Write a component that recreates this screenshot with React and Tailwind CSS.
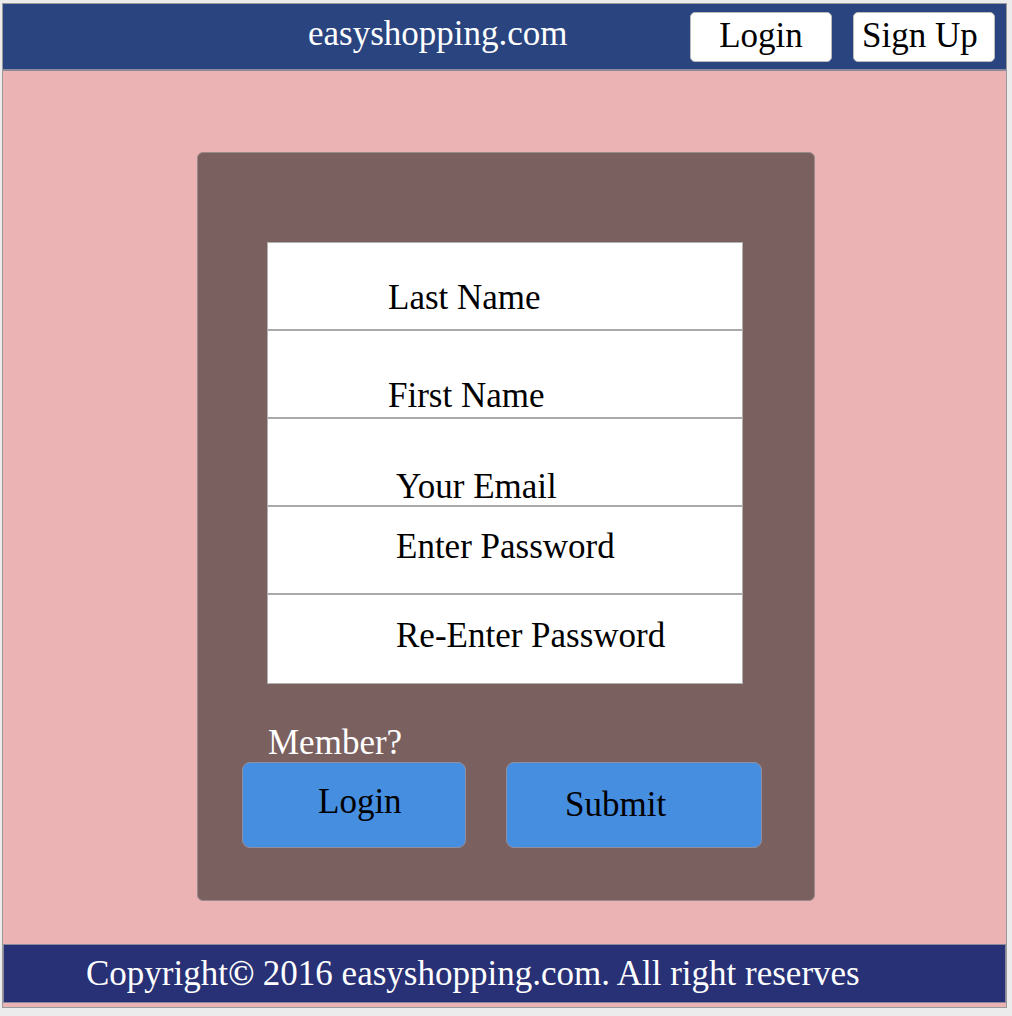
import React from "react";

const serif = { fontFamily: '"Liberation Serif", "Times New Roman", serif' };

function Field({ label, pad, last }) {
  return (
    <div className={`flex h-[88px] ${last ? "" : "border-b-2 border-[#a9a9a9]"}`}>
      <div className={`w-full ${pad}`}>{label}</div>
    </div>
  );
}

export default function App() {
  return (
    <div className="h-[1016px] w-[1012px] bg-[#ececec] pl-[2px] pt-[3px] text-[35px] leading-none" style={serif}>
      <div className="flex h-[1005px] w-[1005px] flex-col border border-[#9a9a9a] bg-[#ebb3b3]">
        <header className="flex h-[67px] shrink-0 items-center border-b-2 border-[#8a8a9a] bg-[#29447f]">
          <div className="ml-[305px] w-[382px] pb-[6px] text-white">easyshopping.com</div>
          <button className="flex h-[50px] w-[142px] items-center justify-center rounded-[5px] border border-[#bbb] bg-white pb-[2px] text-black">
            Login
          </button>
          <button className="ml-[21px] flex h-[50px] w-[142px] items-center justify-start rounded-[5px] border border-[#bbb] bg-white pb-[2px] pl-[8px] text-black">
            Sign Up
          </button>
        </header>

        <main className="flex-1">
          <div className="ml-[194px] mt-[81px] flex h-[749px] w-[618px] flex-col rounded-[6px] border border-[#9a8a8a] bg-[#7b6060]">
            <div className="ml-[69px] mt-[89px] flex w-[476px] flex-col border border-[#b0b0b0] bg-white text-black">
              <Field label="Last Name" pad="pl-[120px] pt-[37px]" />
              <Field label="First Name" pad="pl-[120px] pt-[47px]" />
              <Field label="Your Email" pad="pl-[128px] pt-[50px]" />
              <Field label="Enter Password" pad="pl-[128px] pt-[22px]" />
              <Field label="Re-Enter Password" pad="pl-[128px] pt-[23px]" last />
            </div>
            <div className="ml-[70px] mt-[41px] text-white">Member?</div>
            <div className="ml-[44px] mt-[2px] flex gap-[40px]">
              <button className="flex h-[86px] w-[224px] justify-start rounded-[8px] border border-[#8f8f9f] bg-[#468ee0] pl-[75px] pt-[21px] text-black">
                Login
              </button>
              <button className="flex h-[86px] w-[256px] justify-start rounded-[8px] border border-[#8f8f9f] bg-[#468ee0] pl-[58px] pt-[24px] text-black">
                Submit
              </button>
            </div>
          </div>
        </main>

        <footer className="mb-[4px] flex h-[59px] shrink-0 items-center border border-[#8a8a9a] bg-[#283176] pl-[82px] text-white">
          <span>
            Copyright<span className="font-bold">©</span> 2016 easyshopping.com. All right reserves
          </span>
        </footer>
      </div>
    </div>
  );
}
